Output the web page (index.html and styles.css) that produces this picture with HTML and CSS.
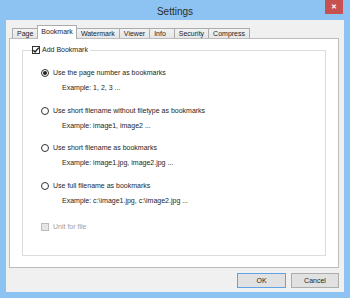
FILE: index.html
```html
<!DOCTYPE html>
<html>
<head>
<meta charset="utf-8">
<link rel="stylesheet" href="styles.css">
</head>
<body>
<div class="window">
  <div class="titlebar">
    <span class="title">Settings</span>
    <span class="close">✕</span>
  </div>
  <div class="client">
    <div class="tabs">
      <div class="tab">Page</div>
      <div class="tab selected">Bookmark</div>
      <div class="tab">Watermark</div>
      <div class="tab">Viewer</div>
      <div class="tab tab-info">Info</div>
      <div class="tab">Security</div>
      <div class="tab">Compress</div>
    </div>
    <div class="panel">
      <fieldset class="group">
        <legend class="legend">
          <span class="check checked"><svg viewBox="0 0 8 8" width="8" height="8"><path d="M1.3 4.2 L3.1 6 L6.8 1.6" fill="none" stroke="#222" stroke-width="1.4"/></svg></span>
          <span>Add Bookmark</span>
        </legend>
        <div class="options">
          <div class="option">
            <div class="radio-row"><span class="radio on"></span><span>Use the page number as bookmarks</span></div>
            <div class="example">Example: 1, 2, 3 ...</div>
          </div>
          <div class="option">
            <div class="radio-row"><span class="radio"></span><span>Use short filename without filetype as bookmarks</span></div>
            <div class="example">Example: image1, image2 ...</div>
          </div>
          <div class="option">
            <div class="radio-row"><span class="radio"></span><span>Use short filename as bookmarks</span></div>
            <div class="example">Example: image1.jpg, image2.jpg ...</div>
          </div>
          <div class="option">
            <div class="radio-row"><span class="radio"></span><span>Use full filename as bookmarks</span></div>
            <div class="example">Example: c:\image1.jpg, c:\image2.jpg ...</div>
          </div>
          <div class="check-row disabled"><span class="check off"></span><span>Unit for file</span></div>
        </div>
      </fieldset>
    </div>
    <div class="buttons">
      <button class="btn default">OK</button>
      <button class="btn">Cancel</button>
    </div>
  </div>
</div>
</body>
</html>
```
FILE: styles.css
```css
* { box-sizing: border-box; }
html, body { margin: 0; padding: 0; }
body {
  width: 350px;
  height: 298px;
  overflow: hidden;
  background: #8cc3f3;
  font-family: "Liberation Sans", Arial, sans-serif;
  font-size: 7px;
  color: #1e1e1e;
}
.window {
  width: 350px;
  height: 298px;
  display: flex;
  flex-direction: column;
}
.titlebar {
  height: 20px;
  position: relative;
  display: flex;
  align-items: center;
  justify-content: center;
}
.title {
  font-size: 10px;
  color: #2b2b2b;
  margin-top: 2px;
}
.close {
  position: absolute;
  right: 7px;
  top: 0;
  width: 18px;
  height: 14px;
  background: #c75050;
  color: #fff;
  font-size: 7px;
  font-weight: bold;
  display: flex;
  align-items: center;
  justify-content: center;
}
.client {
  flex: 1;
  margin: 0 6px 6px 6px;
  background: #f0f0f0;
  display: flex;
  flex-direction: column;
  padding-top: 5px;
}
.tabs {
  display: flex;
  align-items: flex-end;
  padding-left: 6px;
  height: 13px;
  position: relative;
  z-index: 1;
}
.tab {
  height: 10px;
  padding: 0 4px;
  border: 1px solid #acacac;
  border-bottom: none;
  margin-left: -1px;
  background: linear-gradient(#f2f2f2, #e6e6e6);
  line-height: 9px;
  white-space: nowrap;
}
.tab:first-child { margin-left: 0; }
.tab.selected {
  height: 14px;
  background: #fff;
  padding: 0 3px;
  margin-bottom: -1px;
  line-height: 12px;
  position: relative;
}
.tab-info { padding: 0 8px 0 4px; }
.panel {
  margin: 0 5px 0 3px;
  height: 230px;
  background: #fff;
  border: 1px solid #bcbcbc;
  padding: 0 12px 0 12px;
}
.group {
  margin: 6px 0 0 0;
  height: 211px;
  border: 1px solid #dcdcdc;
  padding: 0 0 0 18px;
}
.legend {
  margin-left: -9px;
  padding: 0 2px 0 0;
  display: flex;
  align-items: center;
  gap: 2px;
  line-height: 10px;
  height: 10px;
}
.check {
  width: 8px;
  height: 8px;
  border: 1px solid #333;
  background: #fff;
  display: inline-flex;
  align-items: center;
  justify-content: center;
  flex: none;
}
.check svg { display: block; margin: -1px; }
.options {
  display: flex;
  flex-direction: column;
  gap: 12.5px;
  padding-top: 13px;
}
.option {
  display: flex;
  flex-direction: column;
  gap: 5px;
}
.radio-row, .check-row {
  display: flex;
  align-items: center;
  gap: 4px;
  height: 10px;
  line-height: 10px;
}
.radio {
  width: 8px;
  height: 8px;
  border: 1px solid #333;
  border-radius: 50%;
  background: #fff;
  flex: none;
  display: flex;
  align-items: center;
  justify-content: center;
}
.radio.on::after {
  content: "";
  width: 4px;
  height: 4px;
  border-radius: 50%;
  background: #222;
}
.example {
  padding-left: 21px;
  height: 10px;
  line-height: 10px;
}
.check-row { margin-top: 4px; }
.check-row.disabled { color: #a0a0a0; }
.check.off {
  border-color: #bcbcbc;
  background: #e6e6e6;
}
.buttons {
  display: flex;
  justify-content: flex-end;
  gap: 5px;
  padding-right: 5px;
  margin-top: 5px;
}
.btn {
  height: 15px;
  width: 48px;
  padding: 0;
  border: 1px solid #adadad;
  background: #e1e1e1;
  font-family: "Liberation Sans", Arial, sans-serif;
  font-size: 7px;
  color: #1e1e1e;
  line-height: 13px;
}
.btn.default {
  width: 49px;
  border-color: #5fa3e6;
}
```
